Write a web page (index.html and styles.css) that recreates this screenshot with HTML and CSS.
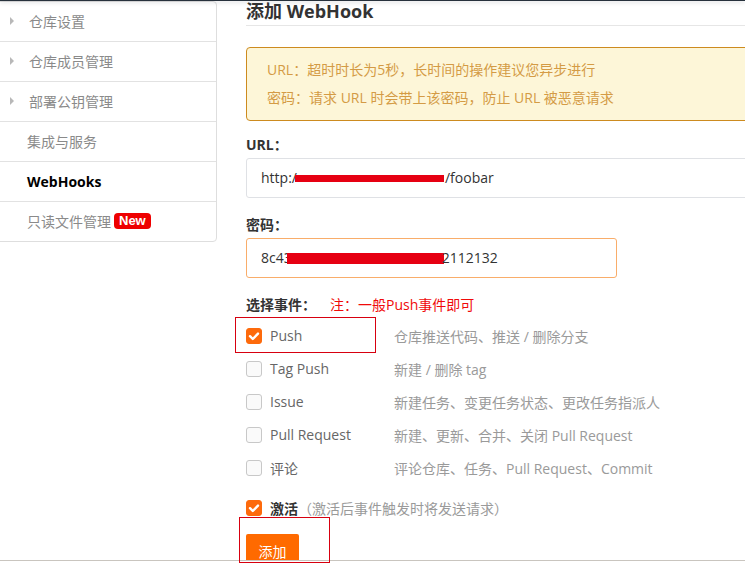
FILE: index.html
```html
<!DOCTYPE html>
<html lang="zh-CN">
<head>
<meta charset="utf-8">
<title>添加 WebHook</title>
<link rel="stylesheet" href="styles.css">
</head>
<body>
<div class="topbar"></div>
<div class="layout">
  <aside class="sidebar">
    <ul class="menu">
      <li class="menu-item has-arrow"><span class="arrow"></span>仓库设置</li>
      <li class="menu-item has-arrow"><span class="arrow"></span>仓库成员管理</li>
      <li class="menu-item has-arrow"><span class="arrow"></span>部署公钥管理</li>
      <li class="menu-item">集成与服务</li>
      <li class="menu-item active">WebHooks</li>
      <li class="menu-item">只读文件管理<span class="badge">New</span></li>
    </ul>
  </aside>
  <main class="main">
    <h2 class="title">添加 WebHook</h2>
    <div class="alert">
      <p>URL：超时时长为5秒，长时间的操作建议您异步进行</p>
      <p>密码：请求 URL 时会带上该密码，防止 URL 被恶意请求</p>
    </div>
    <div class="field field-first">
      <div class="label">URL：</div>
      <div class="input input-wide">http:/<span class="redact redact-url"></span>/foobar</div>
    </div>
    <div class="field">
      <div class="label">密码：</div>
      <div class="input input-secret">8c43<span class="redact redact-secret"></span>2112132</div>
    </div>
    <div class="field">
      <div class="label">选择事件：<span class="note">注：一般Push事件即可</span></div>
    </div>
    <ul class="events">
      <li class="event"><span class="check-wrap"><span class="cb on"><svg viewBox="0 0 16 16" width="16" height="16"><path d="M4 8.2 L6.8 11 L12 5.6" fill="none" stroke="#fff" stroke-width="2.4" stroke-linecap="round" stroke-linejoin="round"/></svg></span><span class="ev-name">Push</span></span><span class="ev-desc">仓库推送代码、推送 / 删除分支</span></li>
      <li class="event"><span class="check-wrap"><span class="cb"></span><span class="ev-name">Tag Push</span></span><span class="ev-desc">新建 / 删除 tag</span></li>
      <li class="event"><span class="check-wrap"><span class="cb"></span><span class="ev-name">Issue</span></span><span class="ev-desc">新建任务、变更任务状态、更改任务指派人</span></li>
      <li class="event"><span class="check-wrap"><span class="cb"></span><span class="ev-name">Pull Request</span></span><span class="ev-desc">新建、更新、合并、关闭 Pull Request</span></li>
      <li class="event"><span class="check-wrap"><span class="cb"></span><span class="ev-name">评论</span></span><span class="ev-desc">评论仓库、任务、Pull Request、Commit</span></li>
    </ul>
    <div class="activate">
      <span class="cb on"><svg viewBox="0 0 16 16" width="16" height="16"><path d="M4 8.2 L6.8 11 L12 5.6" fill="none" stroke="#fff" stroke-width="2.4" stroke-linecap="round" stroke-linejoin="round"/></svg></span>
      <span class="act-name">激活</span><span class="act-desc">（激活后事件触发时将发送请求）</span>
    </div>
    <button class="btn" type="button">添加</button>
  </main>
</div>
<div class="footer-edge"></div>
<div class="mark mark-push"></div>
<div class="mark mark-btn"></div>
</body>
</html>
```
FILE: styles.css
```css
* { box-sizing: border-box; }
html, body { margin: 0; padding: 0; }
body {
  width: 745px;
  height: 565px;
  overflow: hidden;
  position: relative;
  background: #fff;
  color: #333;
  font-family: "Open Sans", "Noto Sans CJK SC", sans-serif;
  font-size: 14px;
}
.topbar {
  height: 1px;
  background: #27313c;
  box-shadow: 0 1px 4px rgba(20, 30, 40, 0.35);
  position: relative;
  z-index: 2;
}
.layout { display: flex; align-items: flex-start; }
.sidebar {
  flex: none;
  width: 218px;
  margin-left: -1px;
  border: 1px solid #dedede;
  border-radius: 0 4px 4px 0;
  background: #fff;
}
.menu { list-style: none; margin: 0; padding: 0; }
.menu-item {
  height: 40px;
  display: flex;
  align-items: center;
  padding-left: 27px;
  padding-bottom: 1px;
  border-bottom: 1px solid #e2e2e2;
  color: #8a8a8a;
  font-family: "Noto Sans CJK SC", "Open Sans", sans-serif;
}
.menu-item:last-child { border-bottom: none; height: 39px; }
.menu-item.has-arrow { padding-left: 10px; }
.arrow {
  width: 0; height: 0;
  border-left: 4px solid #b8b8b8;
  border-top: 4px solid transparent;
  border-bottom: 4px solid transparent;
  margin-right: 15px;
}
.menu-item.active { color: #000; font-weight: bold; font-family: "Open Sans", "Noto Sans CJK SC", sans-serif; }
.badge {
  margin-left: 3px;
  background: #ee0000;
  color: #fff;
  font-family: "Liberation Sans", Arial, sans-serif;
  font-weight: bold;
  font-size: 13px;
  line-height: 16px;
  height: 16px;
  padding: 0 5px;
  border-radius: 4px;
}
.main {
  flex: none;
  width: 620px;
  margin-left: 29px;
}
.title {
  margin: 0;
  font-size: 18px;
  font-weight: bold;
  line-height: 20px;
  padding-bottom: 4px;
  border-bottom: 1px solid #e6e6e6;
  color: #333;
}
.alert {
  margin-top: 21px;
  border: 1px solid #cd8b1f;
  background: #fdf6d8;
  border-radius: 4px;
  padding: 8px 20px;
  color: #d49b45;
  line-height: 28px;
}
.alert p { margin: 0; }
.field { margin-top: 17px; }
.field-first { margin-top: 14px; }
.label {
  font-weight: bold;
  line-height: 20px;
  margin-bottom: 3px;
  color: #333;
}
.note { color: #f00a0a; font-weight: normal; margin-left: 14px; }
.input {
  height: 40px;
  border: 1px solid #dfe1e5;
  border-radius: 3px;
  padding: 0 14px;
  line-height: 38px;
  color: #333;
  display: flex;
  align-items: center;
}
.input-secret { width: 371px; border-color: #f9ad6a; }
.redact { display: inline-block; background: #e60012; flex: none; }
.redact-url { width: 149px; height: 7px; margin-left: -2px; margin-right: 1px; }
.redact-secret { width: 157px; height: 11px; margin-left: -5px; margin-right: -2px; }
.events { list-style: none; margin: 4px 0 0; padding: 0; }
.event { height: 33px; display: flex; align-items: center; }
.check-wrap { width: 148px; flex: none; display: flex; align-items: center; }
.cb {
  width: 16px; height: 16px; flex: none;
  border: 1px solid #c8c8c8;
  border-radius: 3px;
  background: #fafafa;
  display: inline-flex;
  align-items: center;
  justify-content: center;
  overflow: hidden;
}
.cb.on { background: #fd6a0c; border-color: #fd6a0c; }
.cb svg { display: block; flex: none; }
.ev-name { margin-left: 8px; color: #666; }
.ev-desc { color: #9a9a9a; }
.activate { margin-top: 7px; height: 33px; display: flex; align-items: center; }
.act-name { margin-left: 8px; color: #333; font-weight: bold; }
.act-desc { color: #9a9a9a; }
.btn {
  display: block;
  margin-top: 10px;
  width: 53px;
  height: 34px;
  border: none;
  border-radius: 2px;
  background: #ff6a00;
  color: #fff;
  font-family: "Noto Sans CJK SC", sans-serif;
  font-size: 14px;
  padding: 0;
}
.footer-edge {
  position: absolute;
  left: 0; right: 0; top: 560px; bottom: 0;
  background: #fff;
  border-top: 1px solid #c9c5bf;
  z-index: 3;
}
.mark {
  position: absolute;
  border: 1px solid #d7000f;
  z-index: 4;
}
.mark-push { left: 235px; top: 317px; width: 141px; height: 36px; }
.mark-btn { left: 239px; top: 517px; width: 91px; height: 46px; }
```
